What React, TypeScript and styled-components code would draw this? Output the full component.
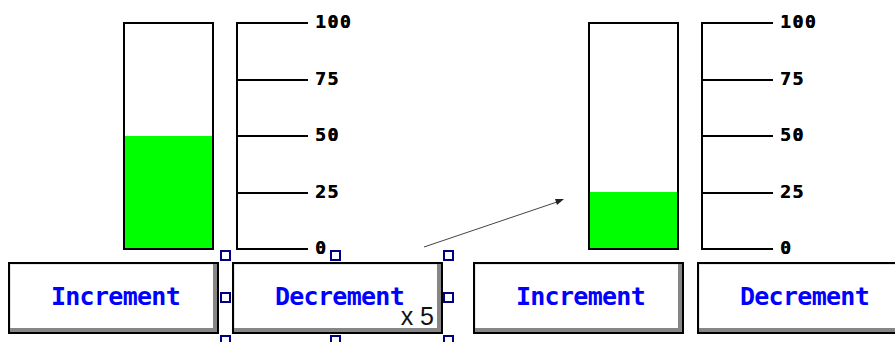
import React from "react";
import styled, { createGlobalStyle } from "styled-components";

const GlobalStyle = createGlobalStyle`
  html, body {
    margin: 0;
    padding: 0;
    background: #ffffff;
    overflow: hidden;
  }
`;

const Page = styled.div`
  position: relative;
  width: 895px;
  height: 342px;
  display: flex;
  gap: 30px;
  padding: 22px 0 0 8px;
  box-sizing: border-box;
`;

const Panel = styled.div`
  display: flex;
  flex-direction: column;
  gap: 12px;
  flex-shrink: 0;
`;

const GaugeRow = styled.div`
  display: flex;
  gap: 22px;
  padding-left: 115px;
`;

const Bar = styled.div`
  width: 91px;
  height: 228px;
  box-sizing: border-box;
  border: 2px solid #000;
  background: #fff;
  display: flex;
  flex-direction: column;
  justify-content: flex-end;
`;

const Fill = styled.div`
  background: #00ff00;
  width: 100%;
`;

const Scale = styled.div`
  height: 228px;
  width: 160px;
  box-sizing: border-box;
  border-left: 2px solid #000;
  display: flex;
  flex-direction: column;
  justify-content: space-between;
`;

const Tick = styled.div`
  height: 2px;
  display: flex;
  align-items: center;
`;

const TickLine = styled.div`
  width: 70px;
  height: 2px;
  background: #000;
  flex-shrink: 0;
`;

const TickLabel = styled.span`
  margin: -2px 0 0 7px;
  font-family: "DejaVu Sans Mono", "Liberation Mono", monospace;
  font-weight: bold;
  font-size: 18px;
  letter-spacing: 1.5px;
  line-height: 1;
  color: #000;
  text-shadow: 0.6px 0 0 #000;
  white-space: nowrap;
`;

const ButtonRow = styled.div`
  display: flex;
  gap: 13px;
`;

const Slot = styled.div`
  position: relative;
  width: 211px;
  height: 72px;
  flex-shrink: 0;
`;

const Button = styled.button`
  width: 100%;
  height: 100%;
  box-sizing: border-box;
  margin: 0;
  padding: 0 0 4px 4px;
  border: 2px solid #000;
  background: #fff;
  box-shadow: inset -4px -4px 0 #868686, inset 1px 1px 0 #e6e6e6;
  font-family: "DejaVu Sans Mono", "Liberation Mono", monospace;
  font-weight: bold;
  font-size: 25px;
  letter-spacing: -0.7px;
  color: #0000ff;
  display: flex;
  align-items: center;
  justify-content: center;
  cursor: pointer;
`;

const Multiplier = styled.span`
  position: absolute;
  right: 9px;
  bottom: 5px;
  font-family: "Liberation Sans", Arial, sans-serif;
  font-size: 25px;
  line-height: 1;
  color: #111;
  pointer-events: none;
`;

const Handle = styled.span<{ $x: string; $y: string }>`
  position: absolute;
  left: ${(p) => p.$x};
  top: ${(p) => p.$y};
  width: 11px;
  height: 11px;
  box-sizing: border-box;
  border: 2px solid #000080;
  background: #fff;
`;

const Connector = styled.svg`
  position: absolute;
  left: 0;
  top: 0;
  pointer-events: none;
`;

const ticks = [100, 75, 50, 25, 0];

const handleSpots: [string, string][] = [
  ["-12px", "-12px"],
  ["98px", "-12px"],
  ["211px", "-12px"],
  ["-12px", "30px"],
  ["211px", "30px"],
  ["-12px", "73px"],
  ["98px", "73px"],
  ["211px", "73px"],
];

const Gauge = ({ value }: { value: number }) => (
  <GaugeRow>
    <Bar>
      <Fill style={{ height: `${value}%` }} />
    </Bar>
    <Scale>
      {ticks.map((t) => (
        <Tick key={t}>
          <TickLine />
          <TickLabel>{t}</TickLabel>
        </Tick>
      ))}
    </Scale>
  </GaugeRow>
);

const App = () => {
  return (
    <>
      <GlobalStyle />
      <Page>
        <Panel>
          <Gauge value={50} />
          <ButtonRow>
            <Slot>
              <Button>Increment</Button>
            </Slot>
            <Slot>
              <Button>Decrement</Button>
              <Multiplier>x 5</Multiplier>
              {handleSpots.map(([x, y], i) => (
                <Handle key={i} $x={x} $y={y} />
              ))}
            </Slot>
          </ButtonRow>
        </Panel>
        <Panel>
          <Gauge value={25} />
          <ButtonRow>
            <Slot>
              <Button>Increment</Button>
            </Slot>
            <Slot>
              <Button>Decrement</Button>
            </Slot>
          </ButtonRow>
        </Panel>
        <Connector width="895" height="342">
          <line x1="424" y1="247" x2="557" y2="202" stroke="#444" strokeWidth="1" />
          <polygon points="564,199 555,199 557,205" fill="#222" />
        </Connector>
      </Page>
    </>
  );
};

export default App;
